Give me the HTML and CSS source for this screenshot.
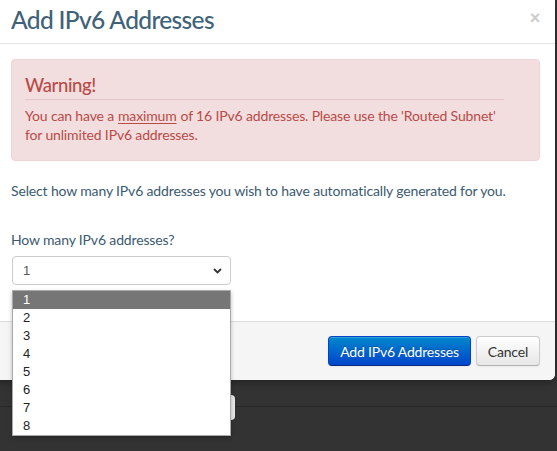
FILE: index.html
```html
<!DOCTYPE html>
<html lang="en">
<head>
    <meta charset="utf-8">
    <title>Add IPv6 Addresses</title>
    <link rel="stylesheet" href="styles.css">
</head>
<body>
    <div class="modal">
        <div class="modal-header">
            <h3>Add IPv6 Addresses</h3>
            <span class="close">&times;</span>
        </div>

        <div class="modal-body">
            <div class="alert alert-error">
                <h4>Warning!</h4>
                <p>You can have a <u>maximum</u> of 16 IPv6 addresses. Please use the 'Routed Subnet' for unlimited IPv6 addresses.</p>
            </div>

            <p class="intro">Select how many IPv6 addresses you wish to have automatically generated for you.</p>

            <label class="field-label">How many IPv6 addresses?</label>
            <div class="select-wrap">
                <div class="select">
                    <span>1</span>
                    <svg class="chevron" width="9" height="6" viewBox="0 0 9 6">
                        <path d="M1 1 L4.5 4.5 L8 1" fill="none" stroke="#333" stroke-width="1.8"/>
                    </svg>
                </div>
                <!-- the open option list of the select -->
                <ul class="options">
                    <li class="active">1</li>
                    <li>2</li>
                    <li>3</li>
                    <li>4</li>
                    <li>5</li>
                    <li>6</li>
                    <li>7</li>
                    <li>8</li>
                </ul>
            </div>
        </div>

        <div class="modal-footer">
            <button class="btn btn-primary">Add IPv6 Addresses</button>
            <button class="btn">Cancel</button>
        </div>
    </div>

    <div class="backdrop">
        <div class="backdrop-row">
            <span class="ghost-btn"></span>
        </div>
    </div>
</body>
</html>
```

FILE: styles.css
```css
body {
    margin: 0;
    background-color: #333333;
    font-family: Lato, "Open Sans", sans-serif;
    font-size: 14px;
    letter-spacing: -0.15px;
    color: #3b5a70;
    overflow: hidden;
}
.modal {
    position: relative;
    z-index: 2;
    width: 559px;
    margin-left: -4px;
    background-color: #ffffff;
    border-radius: 0 0 6px 0;
    box-shadow: 0 3px 7px rgba(0,0,0,0.3);
}
.modal-header {
    display: flex;
    justify-content: space-between;
    align-items: flex-start;
    height: 44px;
    box-sizing: border-box;
    padding: 5px 15px 0;
    border-bottom: 1px solid #e5e5e5;
}
.modal-header h3 {
    margin: 0;
    font-size: 24.5px;
    line-height: 30px;
    font-weight: 500;
    letter-spacing: -0.65px;
    color: #3f6279;
}
.close {
    margin-top: 3px;
    font-family: "Liberation Sans", Arial, sans-serif;
    font-size: 18px;
    line-height: 20px;
    font-weight: bold;
    color: #cccccc;
}
.modal-body {
    height: 277px;
    box-sizing: border-box;
    padding: 15px;
}
.alert {
    padding: 8px 35px 8px 13px;
    border-radius: 4px;
}
.alert-error {
    background-color: #f2dede;
    border: 1px solid #eed3d7;
    color: #b94a48;
}
.alert h4 {
    margin: 4px 0 0;
    padding-bottom: 1px;
    border-bottom: 1px solid #e6c6ca;
    font-size: 18.5px;
    line-height: 26px;
    font-weight: 500;
    letter-spacing: -0.4px;
}
.alert p {
    margin: 6px 0 8px;
    line-height: 19px;
}
.alert u {
    padding: 0 0.5px;
    text-underline-offset: 2px;
}
.intro {
    margin: 20px 0 0;
    line-height: 20px;
}
.field-label {
    display: block;
    margin-top: 29px;
    line-height: 20px;
}
.select-wrap {
    position: relative;
    width: 219px;
    margin: 6px 0 0 1px;
}
.select {
    display: flex;
    justify-content: space-between;
    align-items: center;
    height: 29px;
    box-sizing: border-box;
    padding: 0 8px 0 10px;
    border: 1px solid #cccccc;
    border-radius: 4px;
    background-color: #ffffff;
    font-family: "Liberation Sans", Arial, sans-serif;
    font-size: 13px;
    letter-spacing: 0;
    color: #555555;
}
.options {
    position: absolute;
    z-index: 5;
    top: 34px;
    left: 0;
    width: 219px;
    box-sizing: border-box;
    margin: 0;
    padding: 0;
    list-style: none;
    background-color: #ffffff;
    border: 1px solid #a9a9a9;
    box-shadow: 0 2px 4px rgba(0,0,0,0.25);
    font-family: "Liberation Sans", Arial, sans-serif;
    font-size: 13px;
    letter-spacing: 0;
    color: #222222;
}
.options li {
    height: 18px;
    line-height: 18px;
    padding-left: 10px;
}
.options li.active {
    background-color: #767676;
    color: #ffffff;
}
.modal-footer {
    display: flex;
    justify-content: flex-end;
    gap: 5px;
    padding: 14px 15px;
    border-top: 1px solid #dddddd;
    background-color: #f5f5f5;
    border-radius: 0 0 6px 0;
}
.btn {
    height: 30px;
    padding: 0 11px;
    font-family: Lato, "Open Sans", sans-serif;
    font-size: 14px;
    letter-spacing: -0.2px;
    color: #333333;
    background-image: linear-gradient(#ffffff, #e6e6e6);
    border: 1px solid #cccccc;
    border-bottom-color: #b3b3b3;
    border-radius: 4px;
    box-shadow: inset 0 1px 0 rgba(255,255,255,0.2), 0 1px 2px rgba(0,0,0,0.05);
}
.btn-primary {
    color: #ffffff;
    text-shadow: 0 -1px 0 rgba(0,0,0,0.25);
    background-image: linear-gradient(#0088cc, #0044cc);
    border-color: #0044cc #0044cc #002a80;
}
.backdrop {
    height: 70px;
}
.backdrop-row {
    display: flex;
    justify-content: flex-start;
    height: 26px;
    border-bottom: 1px solid #282828;
}
.ghost-btn {
    width: 60px;
    height: 25px;
    margin: 15px 0 0 175px;
    border-radius: 4px;
    background-color: #e8e8e8;
}
```
